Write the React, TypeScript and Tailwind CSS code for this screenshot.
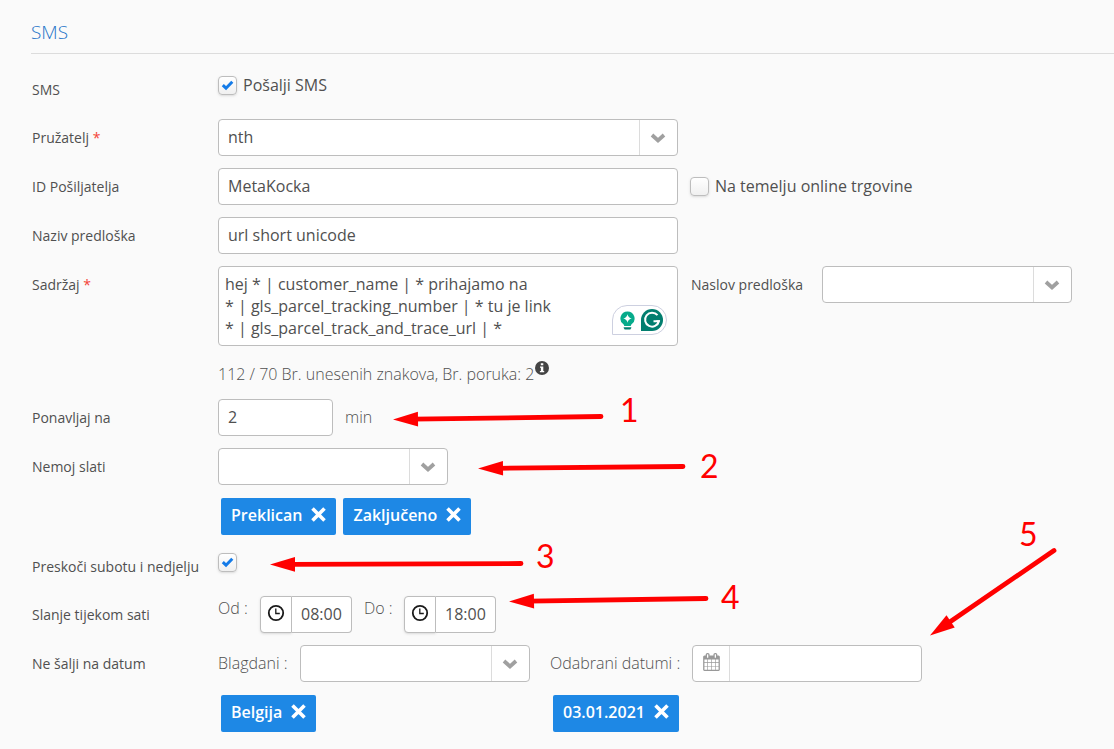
import React, { useState } from "react";

const CALENDAR_PATH =
  "M128 1664h288v-288h-288v288zm352 0h320v-288h-320v288zm-352-352h288v-320h-288v320zm352 0h320v-320h-320v320zm-352-384h288v-288h-288v288zm736 736h320v-288h-320v288zm-384-736h320v-288h-320v288zm768 736h288v-288h-288v288zm-384-352h320v-320h-320v320zm-352-864v-288q0-13-9.500-22.500t-22.500-9.500h-64q-13 0-22.500 9.500t-9.500 22.500v288q0 13 9.500 22.500t22.500 9.500h64q13 0 22.500-9.500t9.500-22.500zm736 864h288v-320h-288v320zm-384-384h320v-288h-320v288zm384 0h288v-288h-288v288zm32-480v-288q0-13-9.500-22.500t-22.500-9.500h-64q-13 0-22.500 9.500t-9.500 22.500v288q0 13 9.500 22.500t22.500 9.500h64q13 0 22.500-9.500t9.500-22.500zm384-64v1280q0 52-38 90t-90 38h-1408q-52 0-90-38t-38-90v-1280q0-52 38-90t90-38h128v-96q0-66 47-113t113-47h64q66 0 113 47t47 113v96h384v-96q0-66 47-113t113-47h64q66 0 113 47t47 113v96h128q52 0 90 38t38 90z";

const inputClass =
  "h-[37px] rounded border border-[#bdbdbd] bg-white px-[9px] pb-0.5 text-base text-[#505050] outline-none";

function Row({
  label,
  htmlFor,
  required,
  className = "mb-3",
  children,
}: {
  label: string;
  htmlFor: string;
  required?: boolean;
  className?: string;
  children: React.ReactNode;
}) {
  return (
    <div className={`flex items-start ${className}`}>
      <label
        htmlFor={htmlFor}
        className="w-[186px] shrink-0 whitespace-nowrap text-sm leading-[37px]"
      >
        {label}
        {required && <span className="text-[#f44336]"> *</span>}
      </label>
      {children}
    </div>
  );
}

function SelectBox({
  id,
  options,
  width,
  label,
}: {
  id: string;
  options: string[];
  width: string;
  label?: string;
}) {
  return (
    <div className={`relative shrink-0 ${width}`}>
      <select
        id={id}
        aria-label={label}
        className={`${inputClass} w-full appearance-none pr-10`}
      >
        {options.map((option) => (
          <option key={option}>{option}</option>
        ))}
      </select>
      <span className="pointer-events-none absolute inset-y-px right-px flex w-[38px] items-center justify-center border-l border-[#dcdcdc] pr-px">
        <svg width="16" height="10" viewBox="0 0 16 10" fill="none">
          <path
            d="M2 2L8 7.400L14 2"
            stroke="#a0a0a0"
            strokeWidth="3.800"
          />
        </svg>
      </span>
    </div>
  );
}

function CheckBox({
  id,
  defaultChecked = false,
  children,
}: {
  id: string;
  defaultChecked?: boolean;
  children?: React.ReactNode;
}) {
  const [checked, setChecked] = useState(defaultChecked);

  return (
    <div className="flex items-center gap-1.5">
      <span className="relative flex h-[19px] w-[19px]">
        <input
          id={id}
          type="checkbox"
          checked={checked}
          onChange={(e) => setChecked(e.target.checked)}
          className="h-full w-full appearance-none rounded border border-[#bdbdbd] bg-linear-to-b from-white to-[#f0f0f0] shadow-sm"
        />
        {checked && (
          <svg
            className="pointer-events-none absolute inset-0"
            width="19"
            height="19"
            viewBox="0 0 19 19"
            fill="none"
          >
            <path
              d="M4.800 9.200L8 12.200L14.300 5.800"
              stroke="#147be8"
              strokeWidth="3"
            />
          </svg>
        )}
      </span>
      {children && (
        <label htmlFor={id} className="pb-0.5 text-base whitespace-nowrap">
          {children}
        </label>
      )}
    </div>
  );
}

function Tag({ children }: { children: string }) {
  return (
    <button
      type="button"
      className="flex h-[37px] items-center gap-[9px] rounded-xs bg-[#1e88e5] px-2.5 pb-1 text-base font-semibold text-white"
    >
      {children}
      <svg width="15" height="15" viewBox="0 0 15 15" fill="none">
        <path d="M1.500 1.500L13.500 13.500M13.500 1.500L1.500 13.500" stroke="#fff" strokeWidth="3.600" />
      </svg>
    </button>
  );
}

function TimeInput({ id, value }: { id: string; value: string }) {
  return (
    <div className="flex">
      <button
        type="button"
        aria-label="Odaberi vrijeme"
        className="flex h-[37px] w-8 items-center justify-center rounded-l border border-[#bdbdbd] bg-white pb-1 shadow-sm"
      >
        <svg width="18" height="18" viewBox="0 0 18 18" fill="none" stroke="#1a1a1a">
          <circle cx="9" cy="9" r="7.200" strokeWidth="1.800" />
          <path d="M8.800 4.500V9.500H12.800" strokeWidth="1.300" />
        </svg>
      </button>
      <input
        id={id}
        type="text"
        defaultValue={value}
        className="h-[37px] w-[60px] rounded-r border border-l-0 border-[#bdbdbd] bg-white pb-0.5 pl-[9px] text-base text-[#505050] outline-none"
      />
    </div>
  );
}

function WritingAssistant() {
  return (
    <div className="absolute right-[11px] bottom-[11px] flex h-[30px] w-[55px] items-center justify-end gap-1.5 rounded-full rounded-bl-none border border-[#cdd0e0] bg-white pr-[3px]">
      <svg width="15" height="19" viewBox="0 0 15 19">
        <path
          d="M7.500 0.500A7 7 0 0 0 3.400 13.200Q4.200 14 4.200 15H10.800Q10.800 14 11.600 13.200A7 7 0 0 0 7.500 0.500Z"
          fill="#06ab8b"
        />
        <path
          d="M7.500 3.300Q8.200 6.800 11.700 7.500Q8.200 8.200 7.500 11.700Q6.800 8.200 3.300 7.500Q6.800 6.800 7.500 3.300Z"
          fill="#fff"
        />
        <path d="M3.700 16.300H11.300V17L10.300 18.500H4.700L3.700 17Z" fill="#027e6f" />
      </svg>
      <svg width="22" height="22" viewBox="0 0 22 22" fill="none">
        <path d="M11 0A11 11 0 1 1 11 22H0V11A11 11 0 0 1 11 0Z" fill="#027e6f" />
        <path
          d="M16.500 6.200A7 7 0 1 0 17.900 12.200H12.500"
          stroke="#fff"
          strokeWidth="2"
        />
        <path d="M15.200 11.200H19L17.300 15.500Z" fill="#fff" />
      </svg>
    </div>
  );
}

const arrows = [
  { tip: [393, 419.5], end: [601, 416.5] },
  { tip: [478, 468.5], end: [683, 466.5] },
  { tip: [270, 564.5], end: [521, 563.5] },
  { tip: [509, 601.5], end: [706, 598.5] },
  { tip: [930, 635.5], end: [1054, 550.5] },
];

function Arrow({ tip, end }: { tip: number[]; end: number[] }) {
  const dx = end[0] - tip[0];
  const dy = end[1] - tip[1];
  const length = Math.hypot(dx, dy);
  const angle = (Math.atan2(dy, dx) * 180) / Math.PI;

  return (
    <g transform={`translate(${tip[0]} ${tip[1]}) rotate(${angle})`}>
      <path d="M0 0L25 -7.300V7.300Z" fill="#f00" />
      <path
        d={`M20 0H${length}`}
        stroke="#f00"
        strokeWidth="4.800"
        strokeLinecap="round"
      />
    </g>
  );
}

function Annotations() {
  const digit = "absolute font-['Lato',sans-serif] text-[32px] leading-8 text-[#f00]";

  return (
    <div className="pointer-events-none absolute inset-0 overflow-hidden">
      <svg className="absolute top-0 left-0" width="1114" height="749">
        {arrows.map((arrow) => (
          <Arrow key={arrow.tip[0]} {...arrow} />
        ))}
      </svg>
      <span className={`${digit} top-[394px] left-[620px]`}>1</span>
      <span className={`${digit} top-[450px] left-[700px]`}>2</span>
      <span className={`${digit} top-[540px] left-[536px]`}>3</span>
      <span className={`${digit} top-[581px] left-[721px]`}>4</span>
      <span className={`${digit} top-[518px] left-[1019px]`}>5</span>
    </div>
  );
}

function App() {
  return (
    <div className="relative min-h-screen bg-[#fafafa] font-['Open_Sans',sans-serif] text-[#505050]">
      <h2 className="ml-[31px] border-b border-[#dcdcdc] pt-5 pb-[9px] text-[19px] leading-6 font-light text-[#1e74c8]">
        SMS
      </h2>
      <form className="pt-[17px] pl-8">
        <Row label="SMS" htmlFor="send" className="mb-[11px]">
          <div className="flex h-[29px] items-center">
            <CheckBox id="send" defaultChecked>
              Pošalji SMS
            </CheckBox>
          </div>
        </Row>

        <Row label="Pružatelj" htmlFor="provider" required>
          <SelectBox id="provider" options={["nth"]} width="w-[460px]" />
        </Row>

        <Row label="ID Pošiljatelja" htmlFor="sender">
          <input
            id="sender"
            type="text"
            defaultValue="MetaKocka"
            className={`${inputClass} mr-3 w-[460px]`}
          />
          <div className="flex h-[37px] items-center">
            <CheckBox id="online">Na temelju online trgovine</CheckBox>
          </div>
        </Row>

        <Row label="Naziv predloška" htmlFor="template">
          <input
            id="template"
            type="text"
            defaultValue="url short unicode"
            className={`${inputClass} w-[460px]`}
          />
        </Row>

        <Row label="Sadržaj" htmlFor="content" required>
          <div>
            <div className="relative w-[460px]">
              <textarea
                id="content"
                defaultValue={
                  "hej * | customer_name | * prihajamo na\n* | gls_parcel_tracking_number | * tu je link\n* | gls_parcel_track_and_trace_url | *"
                }
                className="block h-20 w-full resize-none overflow-hidden rounded border border-[#bdbdbd] bg-white px-1.5 py-1.5 text-base leading-[22px] text-[#505050] outline-none"
              />
              <WritingAssistant />
            </div>
            <p className="mt-[15px] flex h-[26px] items-start text-base leading-[26px] font-light">
              112 / 70 Br. unesenih znakova, Br. poruka: 2
              <svg className="ml-px" width="14" height="14" viewBox="0 0 14 14">
                <circle cx="7" cy="7" r="7" fill="#444" />
                <path
                  d="M5.800 2.300H8.300V4.300H5.800ZM5 5.400H8.300V10H9.200V11.300H4.900V10H5.900V6.700H5Z"
                  fill="#fff"
                />
              </svg>
            </p>
          </div>
          <label
            htmlFor="subject"
            className="ml-[13px] w-[131px] shrink-0 text-sm leading-[37px]"
          >
            Naslov predloška
          </label>
          <SelectBox id="subject" options={[""]} width="w-[250px]" />
        </Row>

        <Row label="Ponavljaj na" htmlFor="repeat">
          <input
            id="repeat"
            type="text"
            defaultValue="2"
            className={`${inputClass} mr-3 w-[115px]`}
          />
          <span className="text-base leading-[37px] font-light">min</span>
        </Row>

        <Row label="Nemoj slati" htmlFor="status" className="mb-[13px]">
          <div>
            <SelectBox id="status" options={[""]} width="w-[230px]" />
            <div className="mt-[13px] ml-[3px] flex gap-[7px]">
              <Tag>Preklican</Tag>
              <Tag>Zaključeno</Tag>
            </div>
          </div>
        </Row>

        <Row label="Preskoči subotu i nedjelju" htmlFor="weekend" className="mb-[11px]">
          <div className="flex h-[29px] items-center">
            <CheckBox id="weekend" defaultChecked />
          </div>
        </Row>

        <Row label="Slanje tijekom sati" htmlFor="from">
          <label htmlFor="from" className="w-[42px] text-base leading-6 font-light">
            Od :
          </label>
          <TimeInput id="from" value="08:00" />
          <label htmlFor="to" className="ml-3 w-10 text-base leading-6 font-light">
            Do :
          </label>
          <TimeInput id="to" value="18:00" />
        </Row>

        <Row label="Ne šalji na datum" htmlFor="holidays" className="mb-4">
          <div className="w-[332px]">
            <div className="flex">
              <label
                htmlFor="holidays"
                className="w-[82px] text-base leading-[37px] font-light"
              >
                Blagdani :
              </label>
              <SelectBox id="holidays" options={[""]} width="w-[230px]" />
            </div>
            <div className="mt-[13px] ml-[3px] flex">
              <Tag>Belgija</Tag>
            </div>
          </div>
          <div>
            <div className="flex">
              <label
                htmlFor="dates"
                className="w-[142px] text-base leading-[37px] font-light"
              >
                Odabrani datumi :
              </label>
              <div className="flex h-[37px] w-[230px] rounded border border-[#bdbdbd] bg-white">
                <button
                  type="button"
                  aria-label="Odaberi datum"
                  className="flex w-[37px] shrink-0 items-center justify-center border-r border-[#dcdcdc] pb-1"
                >
                  <svg width="17" height="18" viewBox="0 0 1664 1792" fill="#999">
                    <path d={CALENDAR_PATH} />
                  </svg>
                </button>
                <input
                  id="dates"
                  type="text"
                  className="w-full min-w-0 rounded-r px-2 text-base outline-none"
                />
              </div>
            </div>
            <div className="mt-[13px] ml-[3px] flex">
              <Tag>03.01.2021</Tag>
            </div>
          </div>
        </Row>
      </form>
      <Annotations />
    </div>
  );
}

export default App;
